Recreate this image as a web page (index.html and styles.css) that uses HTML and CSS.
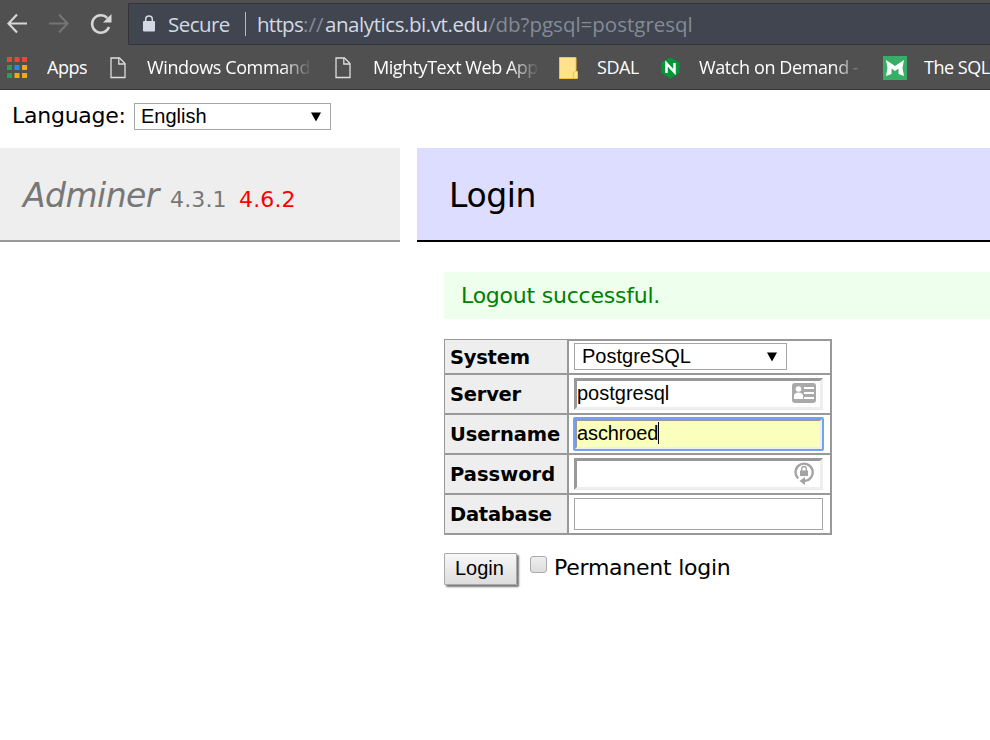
FILE: index.html
```html
<!DOCTYPE html>
<html lang="en">
<head>
<meta charset="utf-8">
<title>Login - Adminer</title>
<link rel="stylesheet" href="styles.css">
</head>
<body>
<header class="browser">
  <div class="toolbar">
    <svg class="nav" width="128" height="46" viewBox="0 0 128 46" fill="none">
      <path d="M27 23.5H9M17 14.5L8.5 23.5L17 32.5" stroke="#d6d6d6" stroke-width="2.2"/>
      <path d="M49 23.5H67M59 14.5L67.500 23.5L59 32.500" stroke="#747474" stroke-width="2.2"/>
      <path d="M107.200 18A8.700 8.700 0 1 0 109 27" stroke="#d6d6d6" stroke-width="2.500"/>
      <path d="M111.500 14V22.500H103Z" fill="#d6d6d6"/>
    </svg>
    <div class="address">
      <svg class="lock" width="12" height="17" viewBox="0 0 12 17"><rect y="6" width="12" height="10.500" rx="1" fill="#d3dae6"/><path d="M2.700 7V4.200a3.300 3.300 0 0 1 6.600 0V7" fill="none" stroke="#d3dae6" stroke-width="1.500"/></svg>
      <span class="secure">Secure</span>
      <span class="divider"></span>
      <span class="url"><span class="scheme">https</span><span class="dim slashes">://</span><span class="host">analytics.bi.vt.edu</span><span class="dim path">/db?pgsql=postgresql</span></span>
    </div>
  </div>
  <nav class="bookmarks">
    <div class="bookmark apps">
      <svg width="20" height="21" viewBox="0 0 20 21"><path fill="#f44336" d="M0 0h5v5H0zM7.500 0h5v5h-5zM15 0h5v5h-5z"/><path fill="#2e9e57" d="M0 8h5v5H0zM0 16h5v5H0z"/><path fill="#2b88ef" d="M7.500 8h5v5h-5z"/><path fill="#f8a80d" d="M15 8h5v5h-5zM7.500 16h5v5h-5zM15 16h5v5h-5z"/></svg>
      <span class="label">Apps</span>
    </div>
    <div class="bookmark commands">
      <svg width="16" height="22" viewBox="0 0 16 22" fill="none" stroke="#dedede" stroke-width="1.300"><path d="M1 1H9.500L15 6.500V20.500H1Z"/><path d="M8.800 1V7H15"/></svg>
      <span class="label fade">Windows Command</span>
    </div>
    <div class="bookmark mighty">
      <svg width="16" height="22" viewBox="0 0 16 22" fill="none" stroke="#dedede" stroke-width="1.300"><path d="M1 1H9.500L15 6.500V20.500H1Z"/><path d="M8.800 1V7H15"/></svg>
      <span class="label fade">MightyText Web App</span>
    </div>
    <div class="bookmark sdal">
      <svg width="19" height="22" viewBox="0 0 19 22"><path d="M.5.500H17V14.500H18.500V21.500H.5Z" fill="#ffe28a" stroke="#edc53e"/><path d="M14.500 21v-5q0-1.500 2-1.500" fill="none" stroke="#edc53e"/></svg>
      <span class="label">SDAL</span>
    </div>
    <div class="bookmark watch">
      <svg width="19" height="22" viewBox="0 0 19 22"><path d="M9.500.5L18.500 5.500V16L9.500 21.500L.5 16V5.500Z" fill="#049639"/><path d="M5.500 16V6.500L13.500 15V6" fill="none" stroke="#fff" stroke-width="2.500"/></svg>
      <span class="label fade">Watch on Demand -</span>
    </div>
    <div class="bookmark sql">
      <svg width="24" height="24" viewBox="0 0 24 24"><path fill="#37ae66" d="M0 0h24v24H0z"/><path fill="#fff" d="M3 4L12 10L21 4L19.500 12L21 20L15.500 18V12.500L12 15L8.500 12.500V18L3 20L4.500 12Z"/></svg>
      <span class="label">The SQL</span>
    </div>
  </nav>
</header>
<div class="language"><span class="lang-label">Language:</span>
  <div class="select lang-select"><span>English</span><svg width="10" height="10" viewBox="0 0 10 10"><path d="M0 .5H10L5 9.500Z"/></svg></div>
</div>
<div class="page">
  <aside class="brand"><em>Adminer</em><span class="version">4.3.1</span><span class="latest">4.6.2</span></aside>
  <main class="main">
    <h2 class="title"><span>Login</span></h2>
    <div class="content">
      <p class="message"><span>Logout successful.</span></p>
      <div class="form">
        <div class="row first"><div class="th system">System</div><div class="td"><div class="select system-select"><span>PostgreSQL</span><svg width="10" height="10" viewBox="0 0 10 10"><path d="M0 .5H10L5 9.500Z"/></svg></div></div></div>
        <div class="row"><div class="th server">Server</div><div class="td"><div class="field inset"><span class="server-value">postgresql</span>
          <svg class="card" width="24" height="20" viewBox="0 0 24 20"><rect width="24" height="20" rx="3" fill="#a9a9a9"/><circle cx="6.500" cy="6" r="2.800" fill="#fff"/><path d="M2 16V12Q3 9.500 6.500 9.500T11 12V16ZM12 4h10v2H12zM12 9h10v2H12zM12 14h10v2H12z" fill="#fff"/></svg></div></div></div>
        <div class="row"><div class="th username">Username</div><div class="td"><div class="field inset focused"><span class="user-value">aschroed</span><i class="caret"></i></div></div></div>
        <div class="row"><div class="th password">Password</div><div class="td"><div class="field inset">
          <svg class="key" width="20" height="25" viewBox="0 0 20 25"><path d="M4.200 17.500A8.600 8.600 0 1 1 11 19.800" fill="none" stroke="#a3a3a3" stroke-width="2.300"/><path d="M5.500 20L11 16V24Z" fill="#a3a3a3"/><path d="M6 9.500h8V15H6z" fill="#a3a3a3"/><path d="M7.700 10V7.800a2.300 2.300 0 0 1 4.600 0V10" fill="none" stroke="#a3a3a3" stroke-width="1.300"/></svg></div></div></div>
        <div class="row"><div class="th database">Database</div><div class="td"><div class="field plain"></div></div></div>
      </div>
      <div class="actions"><div class="button"><span>Login</span></div><i class="checkbox"></i><span class="permanent">Permanent login</span></div>
    </div>
  </main>
</div>
</body>
</html>
```
FILE: styles.css
```css
* { box-sizing: border-box; }
body { margin: 0; width: 990px; height: 740px; overflow: hidden; background: #fff; color: #000; font: 22px/28px "DejaVu Sans", sans-serif; }
svg { display: block; flex: none; }
span { white-space: nowrap; }

.browser { height: 90px; background: #505050; border-bottom: 1px solid #39363b; font-family: "Open Sans", "Noto Sans", sans-serif; }
.toolbar { display: flex; height: 46px; }
.nav { flex: none; }
.address { display: flex; align-items: center; flex: 1; height: 42px; margin-top: 3px; padding-left: 14px; background: #404550; border: 1px solid #343238; border-right: 0; border-radius: 2px 0 0 2px; font-size: 20.5px; color: #d3dae6; }
.lock { margin-top: -1px; }
.secure { width: 62px; margin-left: 13px; letter-spacing: -0.55px; }
.divider { width: 1px; height: 24px; margin: -1px 11px 0 15px; background: #b5bac4; }
.url { display: flex; }
.scheme { width: 46px; letter-spacing: -0.7px; }
.slashes { width: 22px; }
.host { width: 163px; letter-spacing: -0.43px; }
.path { letter-spacing: 0; }
.dim { color: #858b96; }

.bookmarks { display: flex; align-items: center; height: 43px; color: #fff; font-size: 18px; overflow: hidden; }
.bookmark { display: flex; align-items: center; flex: none; height: 43px; }
.bookmark .label { overflow: hidden; margin-top: -2px; letter-spacing: -0.47px; }
.fade { mask-image: linear-gradient(to right, #000 calc(100% - 30px), transparent); }
.apps { width: 103px; padding-left: 7px; gap: 20px; }
.commands { width: 225px; padding-left: 7px; gap: 21px; }
.mighty { width: 225px; padding-left: 7px; gap: 22px; }
.mighty .label { width: 166px; }
.commands .label { width: 165px; letter-spacing: -0.38px; }
.sdal { width: 103px; padding-left: 6px; gap: 19px; }
.watch { width: 220px; padding-left: 5px; gap: 19px; }
.watch .label { width: 164px; letter-spacing: -0.4px; }
.sql { padding-left: 7px; gap: 17px; }

.language { display: flex; height: 58px; padding: 13px 0 0 12px; }
.lang-label { width: 122px; margin-top: -1px; letter-spacing: -0.25px; }
.select { display: flex; align-items: center; justify-content: space-between; height: 27px; padding: 0 9px 0 7px; background: #fff; border: 1px solid #a6a6a6; font: 20px/26px "Liberation Sans", sans-serif; }
.select span { margin-top: -2px; }
.lang-select { width: 197px; padding-left: 6px; }

.page { display: grid; grid-template-columns: 400px 573px; gap: 17px; }
.brand { display: flex; align-items: baseline; height: 94px; padding: 28px 0 0 23px; background: #eee; border-bottom: 2px solid #999; color: #777; line-height: 40px; }
.brand em { width: 147px; font-size: 33px; letter-spacing: -0.55px; }
.version { width: 69px; letter-spacing: 0.15px; }
.latest { color: #f00; letter-spacing: 0.15px; }
.title { height: 94px; margin: 0; padding: 28px 0 0 32px; background: #ddf; border-bottom: 2px solid #000; font-size: 33px; font-weight: normal; line-height: 40px; letter-spacing: -0.4px; }
.content { padding-left: 27px; }
.message { height: 47px; margin: 30px 0 20px; padding: 10px 17px; background: #efe; color: green; letter-spacing: -0.23px; }

.form { width: 388px; border: 1px solid #999; border-right-width: 2px; border-bottom: 0; }
.row { display: grid; grid-template-columns: 124px 1fr; height: 40px; border-bottom: 2px solid #999; }
.first { height: 35px; }
.first .td { border-top: 1px solid #999; padding-top: 2px; }
.th { display: flex; align-items: center; padding: 2px 0 0 5px; background: #eee; border-right: 2px solid #999; font-size: 19.5px; font-weight: bold; letter-spacing: -0.1px; }
.server, .system, .database { letter-spacing: -0.25px; }
.password { letter-spacing: 0; }
.td { padding: 3px 0 0 5px; }
.system-select { width: 213px; }
.field { position: relative; display: flex; width: 249px; height: 32px; font: 20px/24px "Liberation Sans", sans-serif; }
.inset { border: 3px solid; border-color: #999 #eee #eee #999; }
.user-value { letter-spacing: -0.12px; }
.plain { border: 1px solid #a6a6a6; }
.focused { background: #faffbd; outline: 2px solid #72a2f5; outline-offset: -1px; border-width: 3px; border-radius: 1px; }
.caret { width: 1px; height: 22px; margin-top: 1px; background: #000; }
.card { margin: 2px 4px 0 auto; }
.key { margin: 0 6px 0 auto; }

.actions { display: flex; height: 34px; margin-top: 18px; }
.button { width: 73px; height: 32px; padding-left: 10px; background: linear-gradient(#f7f7f7, #ddd); border: 1px solid #aaa; box-shadow: 2px 2px 2px #777; border-radius: 1px; font: 20px/28px "Liberation Sans", sans-serif; }
.checkbox { width: 17px; height: 17px; margin: 3px 7px 0 13px; border: 1px solid #aaa; border-radius: 3px; background: linear-gradient(#eee, #ddd); }
.permanent { margin-top: 1px; letter-spacing: -0.25px; }
```
